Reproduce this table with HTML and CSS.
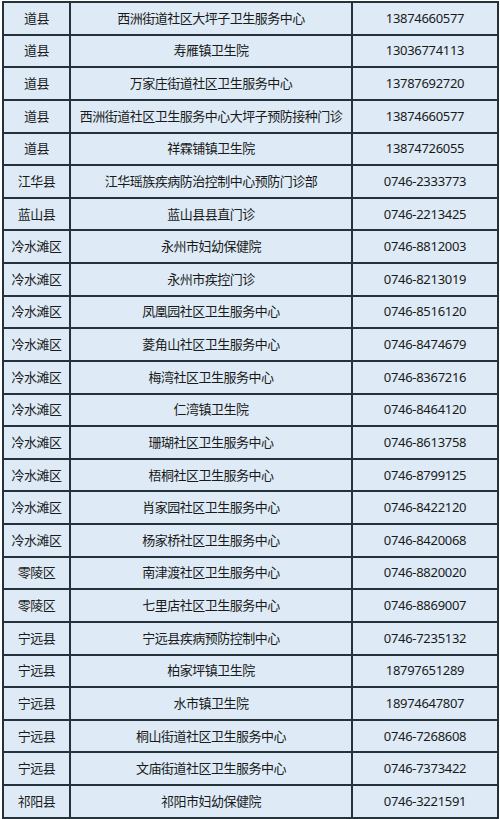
FILE: index.html
```html
<!DOCTYPE html>
<html lang="zh-CN">
<head>
<meta charset="utf-8">
<title>接种门诊联系电话</title>
<link rel="stylesheet" href="styles.css">
</head>
<body>
<div class="page">
  <div class="grid">
    <div class="cell">道县</div><div class="cell">西洲街道社区大坪子卫生服务中心</div><div class="cell num">13874660577</div>
    <div class="cell">道县</div><div class="cell">寿雁镇卫生院</div><div class="cell num">13036774113</div>
    <div class="cell">道县</div><div class="cell">万家庄街道社区卫生服务中心</div><div class="cell num">13787692720</div>
    <div class="cell">道县</div><div class="cell">西洲街道社区卫生服务中心大坪子预防接种门诊</div><div class="cell num">13874660577</div>
    <div class="cell">道县</div><div class="cell">祥霖铺镇卫生院</div><div class="cell num">13874726055</div>
    <div class="cell">江华县</div><div class="cell">江华瑶族疾病防治控制中心预防门诊部</div><div class="cell num">0746-2333773</div>
    <div class="cell">蓝山县</div><div class="cell">蓝山县县直门诊</div><div class="cell num">0746-2213425</div>
    <div class="cell">冷水滩区</div><div class="cell">永州市妇幼保健院</div><div class="cell num">0746-8812003</div>
    <div class="cell">冷水滩区</div><div class="cell">永州市疾控门诊</div><div class="cell num">0746-8213019</div>
    <div class="cell">冷水滩区</div><div class="cell">凤凰园社区卫生服务中心</div><div class="cell num">0746-8516120</div>
    <div class="cell">冷水滩区</div><div class="cell">菱角山社区卫生服务中心</div><div class="cell num">0746-8474679</div>
    <div class="cell">冷水滩区</div><div class="cell">梅湾社区卫生服务中心</div><div class="cell num">0746-8367216</div>
    <div class="cell">冷水滩区</div><div class="cell">仁湾镇卫生院</div><div class="cell num">0746-8464120</div>
    <div class="cell">冷水滩区</div><div class="cell">珊瑚社区卫生服务中心</div><div class="cell num">0746-8613758</div>
    <div class="cell">冷水滩区</div><div class="cell">梧桐社区卫生服务中心</div><div class="cell num">0746-8799125</div>
    <div class="cell">冷水滩区</div><div class="cell">肖家园社区卫生服务中心</div><div class="cell num">0746-8422120</div>
    <div class="cell">冷水滩区</div><div class="cell">杨家桥社区卫生服务中心</div><div class="cell num">0746-8420068</div>
    <div class="cell">零陵区</div><div class="cell">南津渡社区卫生服务中心</div><div class="cell num">0746-8820020</div>
    <div class="cell">零陵区</div><div class="cell">七里店社区卫生服务中心</div><div class="cell num">0746-8869007</div>
    <div class="cell">宁远县</div><div class="cell">宁远县疾病预防控制中心</div><div class="cell num">0746-7235132</div>
    <div class="cell">宁远县</div><div class="cell">柏家坪镇卫生院</div><div class="cell num">18797651289</div>
    <div class="cell">宁远县</div><div class="cell">水市镇卫生院</div><div class="cell num">18974647807</div>
    <div class="cell">宁远县</div><div class="cell">桐山街道社区卫生服务中心</div><div class="cell num">0746-7268608</div>
    <div class="cell">宁远县</div><div class="cell">文庙街道社区卫生服务中心</div><div class="cell num">0746-7373422</div>
    <div class="cell">祁阳县</div><div class="cell">祁阳市妇幼保健院</div><div class="cell num">0746-3221591</div>
  </div>
</div>
</body>
</html>
```

FILE: styles.css
```css
html, body {
  margin: 0;
  padding: 0;
  background: #ffffff;
}

.page {
  padding: 1px 1px 0 2px;
  overflow: hidden;
  height: 819px;
  box-sizing: border-box;
}

.grid {
  display: grid;
  grid-template-columns: 67px 282px 146px;
  grid-auto-rows: 32.64px;
  width: 495px;
  border-top: 2px solid #25323b;
  border-left: 2px solid #25323b;
  background: #deebf6;
  font-family: "Noto Sans", "Noto Sans CJK SC", sans-serif;
  font-size: 13px;
  color: #1a1a1a;
}

.cell {
  display: flex;
  align-items: center;
  justify-content: center;
  border-right: 2px solid #25323b;
  border-bottom: 2px solid #25323b;
  white-space: nowrap;
  overflow: hidden;
  line-height: 1;
  letter-spacing: -0.5px;
}

.num {
  letter-spacing: -0.3px;
}
```
